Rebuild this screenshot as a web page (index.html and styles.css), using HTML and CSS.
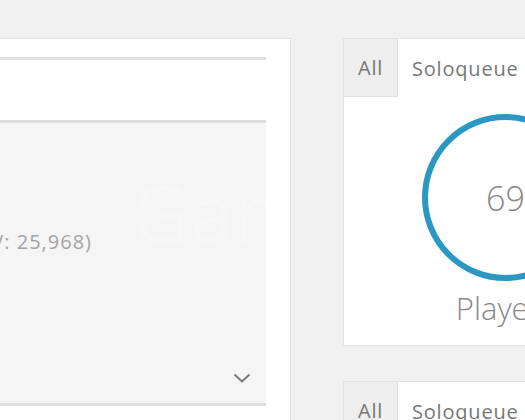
FILE: index.html
```html
<!DOCTYPE html>
<html>
<head>
<meta charset="utf-8"/>
<title>Player stats</title>
<link rel="stylesheet" href="styles.css">
</head>
<body>
<div class="page">

<div class="main-panel">
   <div class="field-top"></div>
   <div class="chart-box">
      <div class="watermark">GameSense</div>
      <p class="chart-caption">(Total EV: 25,968)</p>
      <span class="chevron">
         <svg width="18" height="10" viewBox="0 0 18 10"><polyline points="1.5,1.5 9,8.5 16.5,1.5" fill="none" stroke="#7a7a7a" stroke-width="2"/></svg>
      </span>
   </div>
</div>

<div class="side">
   <div class="card">
      <div class="tabs">
         <span class="tab tab-muted">All</span>
         <span class="tab">Soloqueue</span>
      </div>
      <div class="stat">
         <div class="ring"><span>69</span></div>
         <div class="stat-label">Players</div>
      </div>
   </div>

   <div class="card">
      <div class="tabs">
         <span class="tab tab-muted">All</span>
         <span class="tab">Soloqueue</span>
      </div>
      <div class="stat">
         <div class="ring"><span>12</span></div>
         <div class="stat-label">Teams</div>
      </div>
   </div>
</div>

</div>
</body>
</html>
```

FILE: styles.css
```css
html, body {
   overflow: hidden;
}

body {
   margin: 0;
   background-color: #f1f1f1;
   font-family: "Open Sans", "Liberation Sans", sans-serif;
   color: #777;
}

.page {
   display: flex;
   gap: 52px;
   padding-top: 38px;
   margin-left: -200px;
}

.main-panel {
   flex: 0 0 491px;
   box-sizing: border-box;
   background-color: white;
   border: 1px solid #e3e3e3;
   padding: 18px 24px 80px 20px;
}

.field-top {
   height: 60px;
   border-top: 3px solid #dedede;
}

.chart-box {
   position: relative;
   overflow: hidden;
   box-sizing: border-box;
   display: flex;
   flex-direction: column;
   height: 286px;
   background-color: #f5f5f5;
   border-top: 3px solid #dedede;
   border-bottom: 3px solid #dedede;
   padding: 0 15px 20px 0;
}

/* faint logo printed over the chart */
.watermark {
   position: absolute;
   left: 310px;
   top: 34px;
   font-size: 80px;
   color: #f7f7f7;
   white-space: nowrap;
}

.chart-caption {
   position: relative;
   margin: 106px 0 0 0;
   font-size: 20px;
   line-height: 26px;
   letter-spacing: 1px;
   color: #a3a3a3;
   text-align: right;
   padding-right: 159px;
}

.chevron {
   margin-top: auto;
   align-self: flex-end;
   height: 10px;
}

.chevron svg {
   display: block;
}

.side {
   flex: 0 0 325px;
   display: flex;
   flex-direction: column;
   gap: 35px;
}

.card {
   background-color: white;
   border: 1px solid #e3e3e3;
}

.tabs {
   display: flex;
   height: 58px;
}

.tab {
   display: flex;
   align-items: center;
   padding: 0 14px;
   font-size: 20px;
   letter-spacing: 0.8px;
   color: #777;
}

.tab-muted {
   background-color: #eeeeee;
   border-right: 1px solid #e0e0e0;
   border-bottom: 1px solid #e0e0e0;
   width: 25px;
}

.stat {
   display: flex;
   flex-direction: column;
   align-items: center;
   padding: 17px 0 19px 0;
}

.ring {
   box-sizing: border-box;
   width: 167px;
   height: 167px;
   border: 6px solid #2a98c3;
   border-radius: 50%;
   display: flex;
   align-items: center;
   justify-content: center;
}

.ring span {
   font-size: 34px;
   line-height: 34px;
   font-weight: 300;
   color: #888;
}

.stat-label {
   margin-top: 9px;
   font-size: 31px;
   line-height: 36px;
   font-weight: 300;
   color: #888;
}
```
